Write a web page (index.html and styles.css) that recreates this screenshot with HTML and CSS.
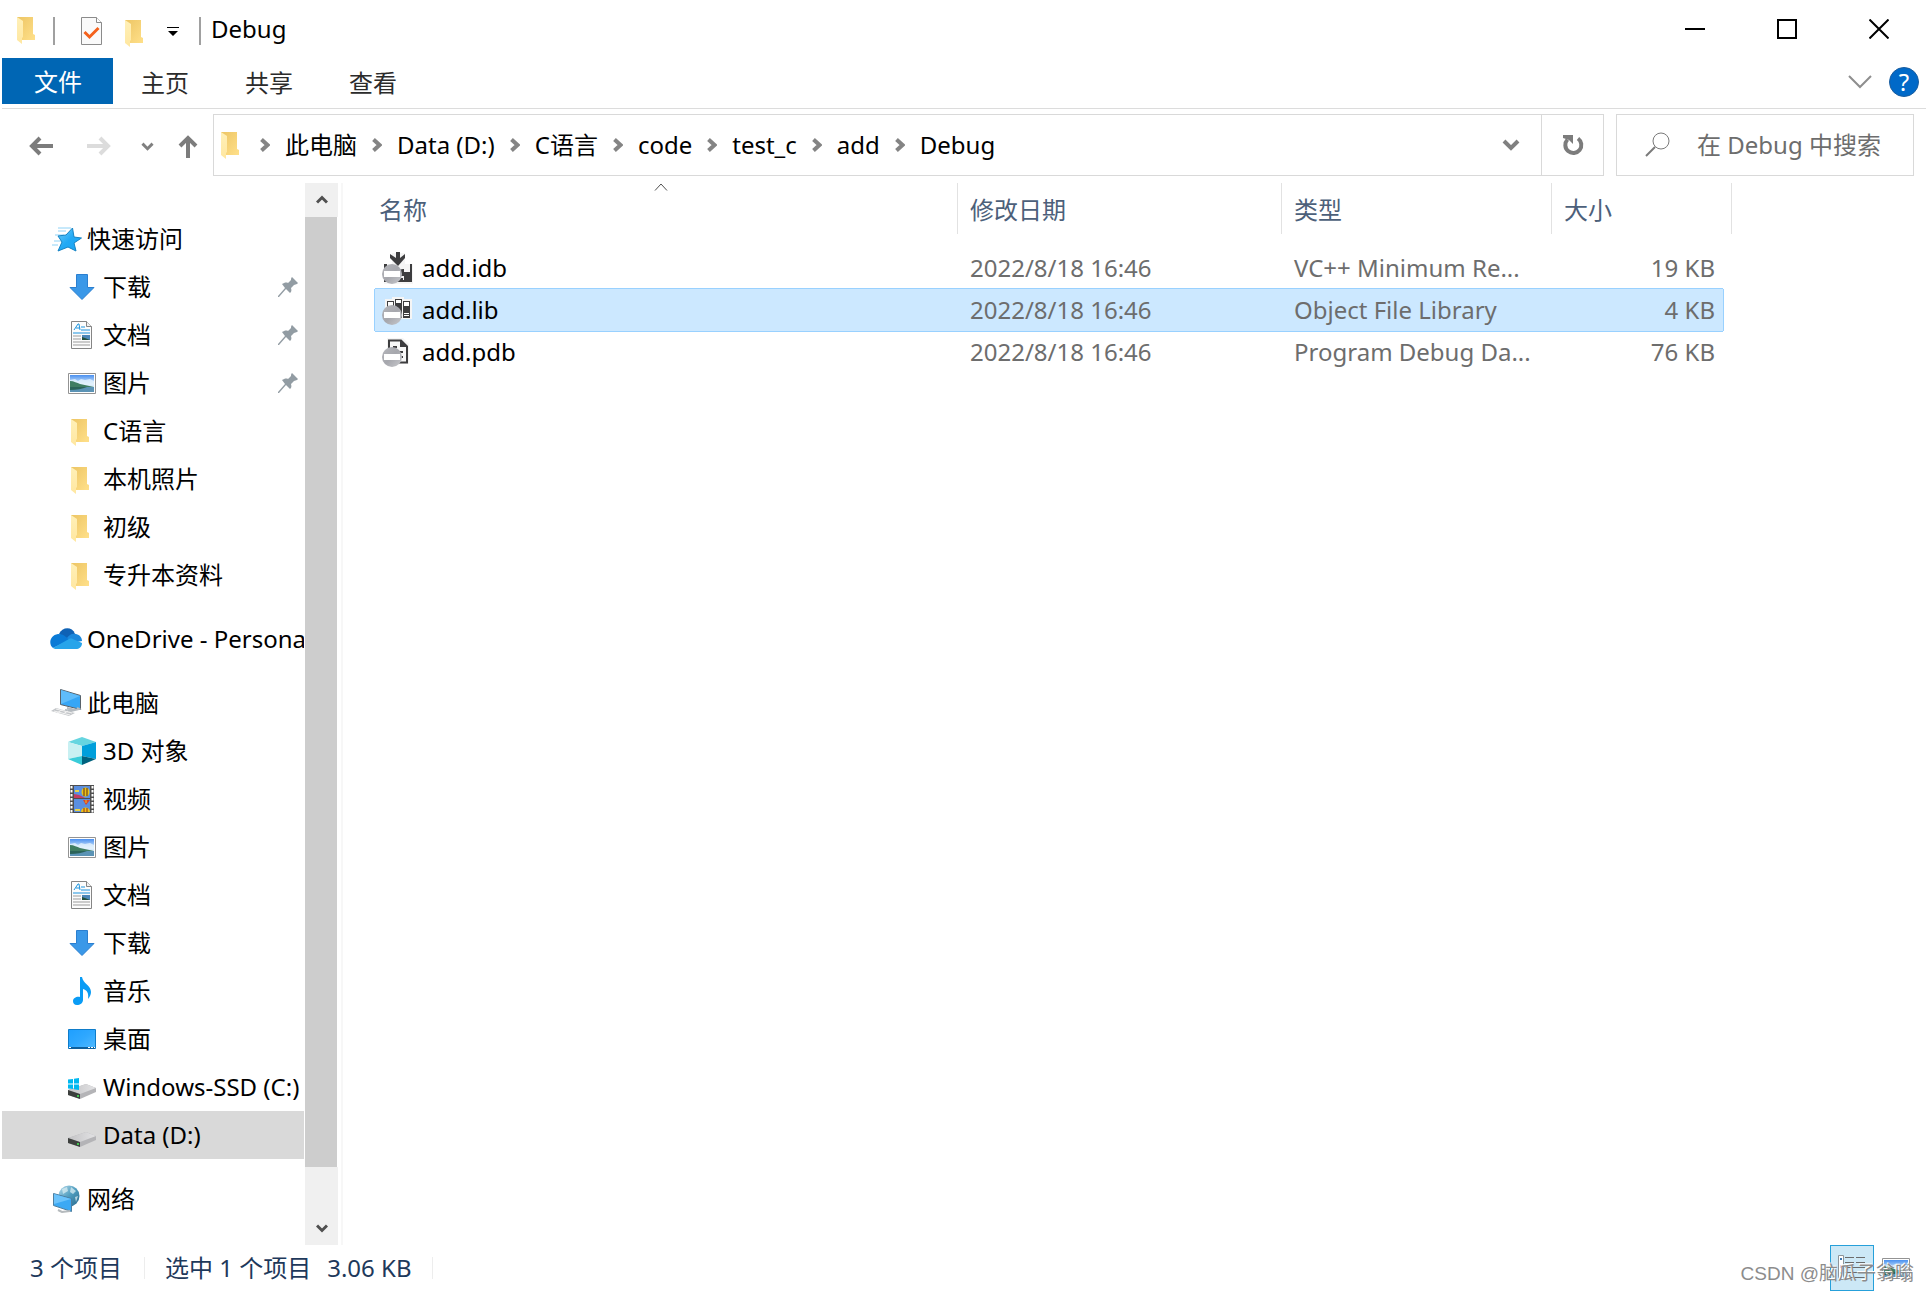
FILE: index.html
```html
<!DOCTYPE html>
<html lang="zh-CN">
<head>
<meta charset="utf-8">
<meta name="viewport" content="width=device-width, initial-scale=1">
<title>Debug</title>
<link rel="stylesheet" href="styles.css">
</head>
<body>
<svg class="sprite" aria-hidden="true">
  <defs>
    <linearGradient id="g-folder" x1="0" x2="1" y1="0" y2="1"><stop offset="0" stop-color="#edc564"/><stop offset="1" stop-color="#ffe08a"/></linearGradient>
    <linearGradient id="g-flap" x1="0" x2="0" y1="0" y2="1"><stop offset="0" stop-color="#fff0b8"/><stop offset="1" stop-color="#ffe7a0"/></linearGradient>
    <linearGradient id="g-star" x1="0" x2="1" y1="0" y2="1"><stop offset="0" stop-color="#6fcdf8"/><stop offset=".5" stop-color="#22a9f5"/><stop offset="1" stop-color="#1ea5f2"/></linearGradient>
    <linearGradient id="g-sky" x1="0" x2="0" y1="0" y2="1"><stop offset="0" stop-color="#4a90f0"/><stop offset=".5" stop-color="#d3e9fb"/><stop offset="1" stop-color="#e8f4fc"/></linearGradient>
    <linearGradient id="g-screen" x1="0" x2="1" y1="0" y2="1"><stop offset="0" stop-color="#1e9fff"/><stop offset=".5" stop-color="#2fa8ff"/><stop offset="1" stop-color="#52baff"/></linearGradient>
    <linearGradient id="g-drive" x1="0" x2="1" y1="0" y2="0"><stop offset="0" stop-color="#c2c2c4"/><stop offset="1" stop-color="#e3e3e5"/></linearGradient>
    <linearGradient id="g-globe" x1="0" x2="1" y1="0" y2="1"><stop offset="0" stop-color="#b9dcec"/><stop offset=".5" stop-color="#4f9dbf"/><stop offset="1" stop-color="#28688c"/></linearGradient>
    <linearGradient id="g-ball" x1="0" x2="1" y1="0" y2="1"><stop offset="0" stop-color="#b5b6bb"/><stop offset=".5" stop-color="#a6a7ad"/><stop offset="1" stop-color="#c9cace"/></linearGradient>
  </defs>
  <symbol id="i-folder" viewBox="0 0 20 28">
    <path d="M1 0h16v17l2 1v5H1z" fill="url(#g-folder)"/>
    <path d="M1 0l6 4v16l-1 1v6L1 23z" fill="url(#g-flap)"/>
  </symbol>
  <symbol id="i-star" viewBox="0 0 32 28">
    <path d="M8 3h13M8 6h8M5 10h9M4 16h7M2 20h6" stroke="#8fd2f6" stroke-width="1"/>
    <path d="M22.500 3l1.500 9 7.500 1-7.500 5 2 8-8-4-10 4 4-9-4-6 8-1z" fill="url(#g-star)" stroke="#1583c4" stroke-width="1"/>
  </symbol>
  <symbol id="i-down" viewBox="0 0 28 28">
    <path d="M8.500 1.500h11v13h6.500l-12 12-12-12h6.500z" fill="#3a98e8" stroke="#2b7fd0"/>
  </symbol>
  <symbol id="i-doc" viewBox="0 0 28 28">
    <path d="M3.500.5h15l5 5v22h-20z" fill="#fcfcfc" stroke="#858585"/>
    <path d="M18.500.5v5h5" fill="#f0f0f0" stroke="#858585"/>
    <path d="M6 9l4-6h1l1 6M8 7h4M13 6h4M13 9h9M5 12h17" fill="none" stroke="#1c93dd"/>
    <path d="M5 15h8M5 18h8M5 21h17M5 24h17" stroke="#9b9b9b"/>
    <path d="M14 14h8v5h-8z" fill="#4c87b8"/><path d="M14 16l3 1 5 2h-8z" fill="#24523f"/>
  </symbol>
  <symbol id="i-pic" viewBox="0 0 28 28">
    <path d="M.5 4.500h27v20H.5z" fill="#fff" stroke="#939393"/>
    <path d="M2 6h24v17H2z" fill="url(#g-sky)"/>
    <path d="M2 11l5-1 3 2 3-2 4 1 5-1 4 2v4H2z" fill="#e5f3fd" opacity=".8"/>
    <path d="M2 12c4 0 7 2 10 3l14 3H2z" fill="#3f7d62"/>
    <path d="M2 18h24v5H2z" fill="#5b93b5"/>
    <path d="M2 18h17c-5 2-10 3-17 3z" fill="#2b6358"/>
  </symbol>
  <symbol id="i-cloud" viewBox="0 0 32 28">
    <path d="M9 9C12 2 22 1 25 9l-7 6z" fill="#0f62b5"/>
    <path d="M8 9c4 0 6 1 8 3l4 3-17 8C-2 19 0 10 8 9z" fill="#0a7ad6"/>
    <path d="M17 13c2-3 5-5 9-4 4 1 6 4 6 7l-10 2z" fill="#1b88dc"/>
    <path d="M3 23l16-9c2-1 4 0 6 1l7 3c0 4-3 6-6 6H8c-2 0-4 0-5-1z" fill="#27a4ea"/>
  </symbol>
  <symbol id="i-pc" viewBox="0 0 32 28">
    <path d="M10.500.5l20 6v14l-20-5z" fill="#36a6f6" stroke="#59626a"/>
    <path d="M11 1l19 6-19 8z" fill="#5fbcfa"/>
    <path d="M17 19l8 2 4-1-2-1M15 21l6 1 8-2" fill="none" stroke="#b4babf" stroke-width="2"/>
    <path d="M1 22l5-3 19 5-6 3z" fill="#c3c6c9"/>
    <path d="M4 22l16 4M6 20l16 4M7 24l6-4M13 25l5-3" stroke="#f3f3f3"/>
  </symbol>
  <symbol id="i-cube" viewBox="0 0 28 28">
    <path d="M14 0l14 5-14 4L0 5z" fill="#66d5e0"/>
    <path d="M0 5l14 4v10L0 22z" fill="#c8f0f2"/>
    <path d="M28 5L14 9v10l14 3z" fill="#009fdb"/>
    <path d="M0 22l14-3v9z" fill="#3accd9"/>
    <path d="M28 22l-14-3v9z" fill="#00627e"/>
  </symbol>
  <symbol id="i-video" viewBox="0 0 28 28">
    <path d="M2 0h24v28H2z" fill="#4e4e4e"/>
    <path d="M3.500 1v27M24.500 1v27" stroke="#fff" stroke-width="2" stroke-dasharray="2.500 1.500"/>
    <path d="M6 1h16v12H6zM6 14h16v13H6z" fill="#5a8fe0"/>
    <path d="M6 9l5 1 6 3H6z" fill="#c33b63"/>
    <ellipse cx="17.500" cy="7" rx="4" ry="4.500" fill="#ecc419"/><path d="M16 3v8M19 3v8" stroke="#5b2b16"/>
    <path d="M15 15h7l-4 5z" fill="#d9452c"/><path d="M18 15v3" stroke="#ecc419"/>
    <path d="M13 27c0-6 9-6 9 0z" fill="#ecc419"/><path d="M16 23v4M19 23v4" stroke="#9b2b16"/>
    <path d="M7 6h4M7 25h5" stroke="#e8d34a" stroke-width="2"/>
  </symbol>
  <symbol id="i-music" viewBox="0 0 28 28">
    <path d="M12 0h2c1 7 9 8 9 15 0 2-1 5-3 7 1-6-1-9-5-10v11c0 3-3 5-6 5s-4-2-4-4c0-3 4-5 7-4z" fill="#0a9cf5"/>
  </symbol>
  <symbol id="i-desk" viewBox="0 0 28 28">
    <path d="M.5 4.500h27v19H.5z" fill="url(#g-screen)" stroke="#0f7cc9"/>
    <path d="M1 22h26v2H1z" fill="#0e5f9c"/><path d="M1 22.500h2M20 22.500h7" stroke="#fff" stroke-dasharray="2 1"/>
  </symbol>
  <symbol id="i-drive" viewBox="0 0 28 28">
    <path d="M0 17l18-6 10 4v4l-16 7-12-4z" fill="#b4b4b7"/>
    <path d="M0 17l18-6 10 4-16 6z" fill="url(#g-drive)"/>
    <path d="M0 17l12 4v5L0 22z" fill="#3c3f3d"/><path d="M9 22h2v2H9z" fill="#43c450"/>
  </symbol>
  <symbol id="i-win" viewBox="0 0 12 12">
    <path d="M0 1.500L5 1v4.500H0zM6 .8L11 0v5.500H6zM0 6.500h5V11l-5-.5zM6 6.500h5V12l-5-.8z" fill="#00b8f0"/>
  </symbol>
  <symbol id="i-cdrive" viewBox="0 0 28 28">
    <use href="#i-drive" width="28" height="28"/><use href="#i-win" y="5" width="12" height="12"/>
  </symbol>
  <symbol id="i-net" viewBox="0 0 32 28">
    <circle cx="19" cy="11" r="10.500" fill="url(#g-globe)"/>
    <path d="M12 4l5-2 1 4-5 3zM21 2l5 4-3 3-3-2zM25 12l3-1-2 6z" fill="#d9edf3" opacity=".75"/>
    <path d="M3.500 8.500l18 5v13l-18-6z" fill="#3ba9f4" stroke="#4f7f9f"/>
    <path d="M4 9l17 5-17 5z" fill="#6cc3fb"/>
    <path d="M8 25l4 2 8-1" fill="none" stroke="#b5babd" stroke-width="2"/>
  </symbol>
  <symbol id="i-pin" viewBox="0 0 20 20">
    <path d="M14 0l6 6-1 1-3 1-3 3c1 3 0 4-1 5l-4-4-7 8H0v-1l7-8-3-4c2-1 4-2 6-1l3-3c0-1 0-2 1-3z" fill="#929ca3"/>
  </symbol>
  <symbol id="i-ball" viewBox="0 0 20 20">
    <circle cx="10" cy="10" r="10" fill="url(#g-ball)"/><path d="M2 7h16v6H2z" fill="#fff"/>
  </symbol>
  <symbol id="i-idb" viewBox="0 0 32 32">
    <path d="M2 12h8V1h13v11h8v20H2z" fill="#f5f5f5"/>
    <path d="M14 0h4v6l5-4v4l-7 8-8-8V2l6 4z" fill="#3d3d3f"/>
    <path d="M2 12h3v5h3v-3l5 1 3 3 5-1h4v3h3v-8h2v18H2z" fill="#3d3d3f"/>
    <path d="M22 16h4v4h-4zM10 24h12v4H10z" fill="#f5f5f5"/><path d="M18 26h3v2h-3z" fill="#3d3d3f"/>
    <use href="#i-ball" y="12" width="20" height="20"/>
  </symbol>
  <symbol id="i-lib" viewBox="0 0 32 32">
    <path d="M3 5h7V3h12v2h8v20H3z" fill="#f5f5f5"/>
    <path d="M5 7h7v17H5zM13 5h7v19h-7zM21 7h7v17h-7z" fill="#3d3d3f"/>
    <path d="M6 8h5v5H6zM14 6h5v3h-5zM22 8h5v4h-5zM22 19h5v1h-5zM22 21h5v1h-5z" fill="#fff"/>
    <use href="#i-ball" y="11" width="20" height="20"/>
  </symbol>
  <symbol id="i-pdb" viewBox="0 0 32 32">
    <path d="M5 2h16l6 6v20H5z" fill="#f5f5f5"/>
    <path d="M7 4.500h12l6 6v16H7z" fill="#f7f7f7" stroke="#3d3d3f" stroke-width="2"/>
    <path d="M18 4v7h8zM11 10h4v2h-4zM12 15h9v2h-9zM17 20h4v2h-4z" fill="#3d3d3f"/>
    <use href="#i-ball" y="11" width="20" height="20"/>
  </symbol>
  <symbol id="i-crumb" viewBox="0 0 10 14"><path d="M1.500 1.500L7.500 7l-6 5.500" fill="none" stroke="#848484" stroke-width="4"/></symbol>
  <symbol id="i-chev" viewBox="0 0 18 12"><path d="M2 2l7 7 7-7" fill="none" stroke="#808080" stroke-width="4"/></symbol>
  <symbol id="i-scroll" viewBox="0 0 12 10"><path d="M1 7.500L6 2.500l5 5" fill="none" stroke="#505050" stroke-width="3"/></symbol>
</svg>

<header class="titlebar">
  <div class="quick">
    <svg class="folder"><use href="#i-folder"/></svg>
    <span class="rule"></span>
    <button class="plain props" aria-label="属性">
      <svg width="22" height="28" viewBox="0 0 22 28"><path d="M.5.5h15l5 5v22H.5z" fill="#fafafa" stroke="#8b8b8b"/><path d="M15.500.5v5h5" fill="#fff" stroke="#8b8b8b"/><path d="M3.500 15l5 5 9-9" fill="none" stroke="#f4611c" stroke-width="3"/></svg>
    </button>
    <button class="plain newdir" aria-label="新建文件夹"><svg class="folder"><use href="#i-folder"/></svg></button>
    <button class="plain more" aria-label="自定义快速访问工具栏"><svg width="12" height="10" viewBox="0 0 12 10"><path d="M0 0h12v1H0zM1 4h10L6 9z"/></svg></button>
    <span class="rule"></span>
  </div>
  <h1 class="title">Debug</h1>
  <div class="controls">
    <button class="plain" aria-label="最小化"><svg width="20" height="20"><path d="M0 9h20v2H0z"/></svg></button>
    <button class="plain" aria-label="最大化"><svg width="20" height="20"><path d="M1 1h18v18H1z" fill="none" stroke="#000" stroke-width="2"/></svg></button>
    <button class="plain" aria-label="关闭"><svg width="20" height="20"><path d="M.5.5l19 19M19.500.5l-19 19" stroke="#000" stroke-width="2"/></svg></button>
  </div>
</header>

<div class="ribbon">
  <button class="tab file">文件</button>
  <button class="tab">主页</button>
  <button class="tab">共享</button>
  <button class="tab">查看</button>
  <div class="ribbon-end">
    <button class="plain" aria-label="展开功能区"><svg width="24" height="14"><path d="M1 1l11 11L23 1" fill="none" stroke="#8e8e8e" stroke-width="2"/></svg></button>
    <button class="plain help" aria-label="帮助">?</button>
  </div>
</div>

<div class="navrow">
  <div class="history">
    <button class="plain" aria-label="后退"><svg width="24" height="20"><path d="M24 10H3M11 2L3 10l8 8" fill="none" stroke="#7c7c7c" stroke-width="4"/></svg></button>
    <button class="plain" aria-label="前进"><svg width="24" height="20"><path d="M0 10h21M13 2l8 8-8 8" fill="none" stroke="#dcdcdc" stroke-width="4"/></svg></button>
    <button class="plain recent" aria-label="最近浏览的位置"><svg width="13" height="9"><use href="#i-chev"/></svg></button>
    <button class="plain up" aria-label="上移"><svg width="20" height="24"><path d="M10 24V4M2 12l8-8 8 8" fill="none" stroke="#7c7c7c" stroke-width="4"/></svg></button>
  </div>
  <div class="address">
    <svg class="folder"><use href="#i-folder"/></svg>
    <nav class="crumbs" aria-label="路径">
      <svg><use href="#i-crumb"/></svg><a href="#">此电脑</a>
      <svg><use href="#i-crumb"/></svg><a href="#">Data (D:)</a>
      <svg><use href="#i-crumb"/></svg><a href="#">C语言</a>
      <svg><use href="#i-crumb"/></svg><a href="#">code</a>
      <svg><use href="#i-crumb"/></svg><a href="#">test_c</a>
      <svg><use href="#i-crumb"/></svg><a href="#">add</a>
      <svg><use href="#i-crumb"/></svg><a href="#">Debug</a>
    </nav>
    <button class="plain drop" aria-label="以前的位置"><svg width="18" height="12"><use href="#i-chev"/></svg></button>
    <button class="plain refresh" aria-label="刷新"><svg width="22" height="22"><path d="M16 4.500A8 8 0 1 1 5.500 5.500" fill="none" stroke="#7c7c7c" stroke-width="4"/><path d="M1 1h10v9l-4-4-3-1-3-1z" fill="#7c7c7c"/></svg></button>
  </div>
  <label class="search">
    <svg width="26" height="26"><circle cx="16" cy="9" r="8" fill="none" stroke="#7a7a7a" stroke-width="1"/><path d="M10 15L1 24" stroke="#7a7a7a" stroke-width="2"/></svg>
    <input type="text" aria-label="搜索" placeholder="在 Debug 中搜索">
  </label>
</div>

<main class="body">
  <nav class="tree" aria-label="导航窗格">
    <ul>
      <li><a class="root" href="#"><svg><use href="#i-star"/></svg>快速访问</a>
        <ul>
          <li><a href="#"><svg><use href="#i-down"/></svg>下载<svg class="pin"><use href="#i-pin"/></svg></a></li>
          <li><a href="#"><svg><use href="#i-doc"/></svg>文档<svg class="pin"><use href="#i-pin"/></svg></a></li>
          <li><a href="#"><svg><use href="#i-pic"/></svg>图片<svg class="pin"><use href="#i-pin"/></svg></a></li>
          <li><a href="#"><svg class="dir"><use href="#i-folder"/></svg>C语言</a></li>
          <li><a href="#"><svg class="dir"><use href="#i-folder"/></svg>本机照片</a></li>
          <li><a href="#"><svg class="dir"><use href="#i-folder"/></svg>初级</a></li>
          <li><a href="#"><svg class="dir"><use href="#i-folder"/></svg>专升本资料</a></li>
        </ul>
      </li>
      <li><a class="root" href="#"><svg><use href="#i-cloud"/></svg>OneDrive - Personal</a></li>
      <li><a class="root" href="#"><svg><use href="#i-pc"/></svg>此电脑</a>
        <ul>
          <li><a href="#"><svg><use href="#i-cube"/></svg>3D 对象</a></li>
          <li><a href="#"><svg><use href="#i-video"/></svg>视频</a></li>
          <li><a href="#"><svg><use href="#i-pic"/></svg>图片</a></li>
          <li><a href="#"><svg><use href="#i-doc"/></svg>文档</a></li>
          <li><a href="#"><svg><use href="#i-down"/></svg>下载</a></li>
          <li><a href="#"><svg><use href="#i-music"/></svg>音乐</a></li>
          <li><a href="#"><svg><use href="#i-desk"/></svg>桌面</a></li>
          <li><a href="#"><svg><use href="#i-cdrive"/></svg>Windows-SSD (C:)</a></li>
          <li><a class="current" href="#"><svg><use href="#i-drive"/></svg>Data (D:)</a></li>
        </ul>
      </li>
      <li><a class="root" href="#"><svg><use href="#i-net"/></svg>网络</a></li>
    </ul>
  </nav>
  <div class="scrollbar">
    <button class="plain" aria-label="向上滚动"><svg width="12" height="10"><use href="#i-scroll"/></svg></button>
    <div class="thumb"></div>
    <div class="track"></div>
    <button class="plain down" aria-label="向下滚动"><svg width="12" height="10"><use href="#i-scroll"/></svg></button>
  </div>
  <section class="files">
    <table>
      <colgroup><col class="c-name"><col class="c-date"><col class="c-type"><col class="c-size"><col class="c-end"></colgroup>
      <thead>
        <tr>
          <th><button class="plain head first">名称<svg class="sort" width="14" height="8"><path d="M1 7.500L7 1l6 6.500" fill="none" stroke="#505050"/></svg></button></th>
          <th><button class="plain head">修改日期</button></th>
          <th><button class="plain head">类型</button></th>
          <th colspan="2"><button class="plain head">大小</button></th>
        </tr>
      </thead>
      <tbody>
        <tr><td><span class="name"><svg><use href="#i-idb"/></svg>add.idb</span></td><td>2022/8/18 16:46</td><td>VC++ Minimum Re...</td><td class="size">19 KB</td></tr>
        <tr class="selected"><td><span class="name"><svg><use href="#i-lib"/></svg>add.lib</span></td><td>2022/8/18 16:46</td><td>Object File Library</td><td class="size">4 KB</td></tr>
        <tr><td><span class="name"><svg><use href="#i-pdb"/></svg>add.pdb</span></td><td>2022/8/18 16:46</td><td>Program Debug Da...</td><td class="size">76 KB</td></tr>
      </tbody>
    </table>
  </section>
</main>

<footer class="status">
  <span class="cell">3 个项目</span>
  <span class="cell picked"><span>选中 1 个项目</span><span>3.06 KB</span></span>
  <div class="views">
    <button class="plain view on" aria-label="详细信息"><svg width="28" height="28"><path d="M.5 1.500h5v24h-5z" fill="#fff" stroke="#8d9499"/><path d="M2 4h2v2H2zM2 18h2v2H2z" fill="#3b78b4"/><path d="M2 11h2v3H2z" fill="#c4512b"/><path d="M7 3.500h9M18 3.500h9M7 8.500h9M18 8.500h9M7 13.500h20M7 18.500h20M7 23.500h20" stroke="#6b6b6b"/></svg></button>
    <button class="plain view" aria-label="大图标"><svg width="28" height="28"><use href="#i-pic"/></svg></button>
    <span class="watermark">CSDN @脑瓜子翁嗡</span>
  </div>
</footer>
</body>
</html>
```

FILE: styles.css
```css
* { box-sizing: border-box; }

body {
  margin: 0;
  padding: 0 2px;
  min-height: 100vh;
  display: flex;
  flex-direction: column;
  background: #fff;
  color: #000;
  font: 24px/32px "Noto Sans", "Noto Sans CJK SC", sans-serif;
}

svg { display: block; flex: none; }
.sprite { position: absolute; width: 0; height: 0; }
a { color: inherit; text-decoration: none; }
ul { list-style: none; margin: 0; padding: 0; }

button, input { font: inherit; color: inherit; }
.plain {
  border: 0;
  padding: 0;
  background: none;
  display: flex;
  align-items: center;
  justify-content: center;
}
.folder { width: 20px; height: 28px; }

/* Title bar */
.titlebar { display: flex; height: 58px; }
.quick { display: flex; align-items: flex-start; padding: 17px 0 0 14px; }
.rule { width: 2px; height: 28px; background: #a0a0a0; margin-left: 17px; }
.props { margin-left: 26px; }
.newdir { margin: 3px 0 0 21px; }
.more { margin: 10px 0 0 23px; }
.more + .rule { margin-left: 20px; }
.title { margin: 0; padding: 13px 0 0 10px; font-size: 24px; font-weight: 400; }
.controls { display: flex; margin-left: auto; padding-right: 1px; }
.controls button { width: 92px; }

/* Ribbon */
.ribbon { display: flex; height: 51px; padding-bottom: 4px; border-bottom: 1px solid #dcdcdc; }
.tab { border: 0; padding: 4px 28px 0; background: none; color: #2b2b2b; }
.tab.file { padding: 2px 31px 0 32px; background: #0066b4; color: #fff; }
.ribbon-end { display: flex; align-items: center; gap: 17px; margin-left: auto; padding: 2px 7px 0 0; }
.help {
  width: 30px;
  height: 30px;
  border: 1px solid #1a5d9e;
  border-radius: 50%;
  background: #0069c8;
  color: #fff;
}

/* Address row */
.navrow { display: flex; padding: 5px 12px 7px 0; }
.history { display: flex; align-items: center; width: 211px; padding: 2px 0 0 27px; }
.history button + button { margin-left: 34px; }
.history button.recent { margin-left: 30px; }
.history button.up { margin-left: 24px; }
.address { flex: 1; display: flex; align-items: center; height: 62px; padding-left: 6px; border: 1px solid #d9d9d9; }
.address .folder { margin-top: 2px; }
.crumbs { flex: 1; display: flex; align-items: center; gap: 15px; padding-left: 20px; }
.crumbs svg { width: 10px; height: 14px; }
.drop { width: 60px; }
.refresh { width: 62px; height: 60px; border-left: 1px solid #d9d9d9; }
.search {
  display: flex;
  align-items: center;
  gap: 26px;
  width: 298px;
  margin-left: 12px;
  padding-left: 28px;
  border: 1px solid #d9d9d9;
}
.search input { flex: 1; min-width: 0; border: 0; padding: 0; background: none; outline: 0; }
.search input::placeholder { color: #6d6d6d; opacity: 1; }

/* Navigation pane */
.body { flex: 1; display: flex; }
.tree { width: 302px; padding-top: 32px; overflow: hidden; }
.tree > ul { display: flex; flex-direction: column; gap: 16px; }
.tree a { display: flex; align-items: center; gap: 7px; height: 48px; padding-left: 66px; white-space: nowrap; }
.tree a.root { gap: 5px; padding-left: 48px; }
.tree svg { width: 28px; height: 28px; }
.tree .root svg { width: 32px; }
.tree svg.dir { width: 20px; margin: 4px 6px 0 2px; }
.tree svg.pin { width: 20px; height: 20px; margin: 0 6px 0 auto; }
.current { background: #d9d9d9; }

.scrollbar { width: 34px; display: flex; flex-direction: column; padding-left: 1px; }
.scrollbar button { height: 34px; background: #f0f0f0; }
.thumb { flex: 950; margin-right: 1px; background: #cdcdcd; }
.track { flex: 44; background: #f0f0f0; }
.down svg { transform: rotate(180deg); }

/* File list */
.files { flex: 1; margin-left: 3px; padding-left: 32px; border-left: 2px solid #f7f7f7; overflow: hidden; }
table { table-layout: fixed; width: 1357px; border-spacing: 0; }
.c-name { width: 583px; }
.c-date { width: 324px; }
.c-type { width: 270px; }
.c-size { width: 171px; }
.c-end { width: 9px; }
th { padding: 0 0 13px; font-weight: 400; }
.head {
  position: relative;
  width: 100%;
  height: 51px;
  padding: 3px 12px 0;
  justify-content: flex-start;
  border-right: 1px solid #e2e2e2;
  color: #4c607a;
}
.head.first { padding-left: 4px; }
.sort { position: absolute; top: 0; left: calc(50% - 12px); }
td { height: 42px; padding: 0 12px; color: #6d6d6d; white-space: nowrap; }
td:first-child { padding-left: 7px; color: #000; }
.name { display: flex; align-items: center; gap: 8px; }
.name svg { width: 32px; height: 32px; }
td.size { padding-right: 8px; text-align: right; }
.selected td { background: #cce8ff; box-shadow: 0 -1px #99d1ff, 0 1px #99d1ff; }
.selected td:first-child { box-shadow: 0 -1px #99d1ff, 0 1px #99d1ff, -1px 0 #99d1ff; }
.selected td:last-child { box-shadow: 0 -1px #99d1ff, 0 1px #99d1ff, 1px 0 #99d1ff; }

/* Status bar */
.status { display: flex; align-items: center; height: 48px; padding-bottom: 2px; color: #1e395b; }
.cell { display: flex; line-height: 22px; padding: 0 22px 0 28px; border-right: 1px solid #ededed; }
.picked { gap: 16px; padding: 0 20px; }
.views { position: relative; display: flex; align-self: flex-start; margin-left: auto; padding-right: 8px; }
.view { width: 44px; height: 46px; }
.view.on { border: 1px solid #26a0da; background: #cce8f6; }
.watermark {
  position: absolute;
  right: 12px;
  top: 17px;
  font: 19px/24px "Liberation Sans", "Noto Sans CJK SC", sans-serif;
  white-space: nowrap;
  color: #8c8c8c;
  text-shadow: -1px -1px #fff;
}
```
